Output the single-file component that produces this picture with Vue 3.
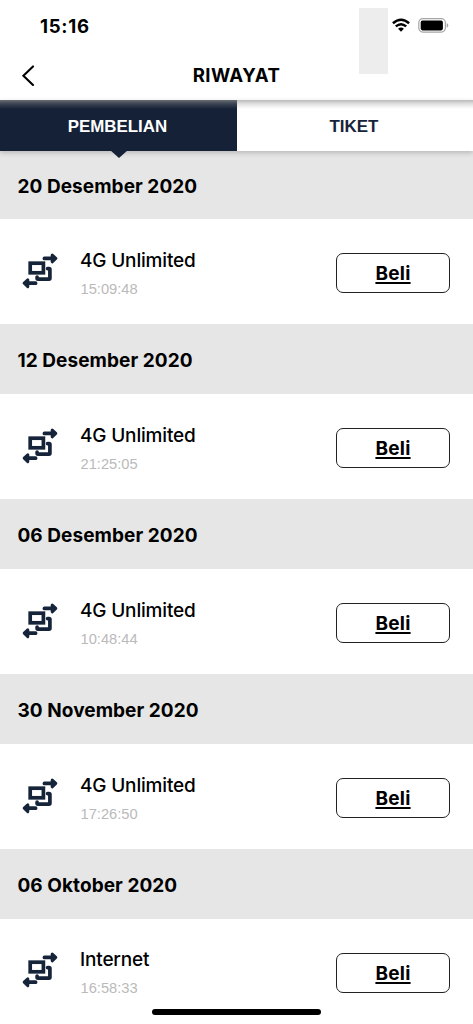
<script setup>
const groups = [
  { date: '20 Desember 2020', name: '4G Unlimited', time: '15:09:48' },
  { date: '12 Desember 2020', name: '4G Unlimited', time: '21:25:05' },
  { date: '06 Desember 2020', name: '4G Unlimited', time: '10:48:44' },
  { date: '30 November 2020', name: '4G Unlimited', time: '17:26:50' },
  { date: '06 Oktober 2020', name: 'Internet', time: '16:58:33' },
]
</script>

<template>
  <div class="screen">
    <header class="top">
      <div class="status">
        <span class="clock">15:16</span>
        <div class="indicators">
          <svg class="wifi" width="18" height="14" viewBox="0 0 18 14" fill="none" stroke="#000" stroke-width="2.5">
            <path d="M.9 5.2Q9-1.8 17.1 5.2" />
            <path d="M3.8 8.4Q9 4 14.2 8.4" />
            <path d="M6.1 10.8Q9 8.4 11.9 10.8L9 13.8Z" fill="#000" stroke="none" />
          </svg>
          <svg class="battery" width="31" height="15" viewBox="0 0 31 15">
            <rect x=".8" y=".7" width="26.6" height="13.4" rx="4" fill="none" stroke="#a6a6a6" stroke-width="1.2" />
            <rect x="2.7" y="2.6" width="22.2" height="9.8" rx="1.8" />
            <path d="M28.7 5v4.8Q30.3 9 30.3 7.4T28.7 5Z" fill="#a6a6a6" />
          </svg>
        </div>
      </div>
      <div class="titlebar">
        <svg class="back" width="14" height="22" viewBox="0 0 14 22" fill="none" stroke="#000" stroke-width="2.1" stroke-linecap="round">
          <path d="M12 1.4L2.4 10.8L12 20" />
        </svg>
        <h1>RIWAYAT</h1>
      </div>
      <i class="patch"></i>
    </header>
    <nav class="tabs">
      <div class="tab active"><span>PEMBELIAN</span></div>
      <div class="tab"><span>TIKET</span></div>
    </nav>
    <main>
      <section v-for="g in groups" :key="g.date">
        <h2><span>{{ g.date }}</span></h2>
        <div class="row">
          <svg class="swap" width="36" height="36" viewBox="0 0 36 36" fill="none" stroke="#16243a" stroke-width="3.7" stroke-linecap="round" stroke-linejoin="round">
            <rect x="8.2" y="10.2" width="13.2" height="9.6" stroke-linejoin="miter" />
            <path d="M25.6 15.6h1.4q.9 0 .9.9v8.8q0 .9-.9.9H16q-.9 0-.9-.9V24.2" />
            <path d="M22.4 5.4H31M13.6 30.2H5" />
            <path d="M30.2 2L33.8 5.4L30.2 8.8ZM5.8 26.8L2.2 30.2L5.8 33.6Z" fill="#16243a" stroke-width="3" />
          </svg>
          <div class="info">
            <div class="name"><span>{{ g.name }}</span></div>
            <div class="time"><span>{{ g.time }}</span></div>
          </div>
          <button><span>Beli</span></button>
        </div>
      </section>
    </main>
    <i class="home"></i>
  </div>
</template>

<style>
body { background: #fff; overflow: hidden; }
</style>

<style scoped>
.screen { position: relative; width: 473px; height: 1024px; overflow: hidden; background: #fff; color: #000; font-family: Inter, "Liberation Sans", sans-serif; }
.top { position: relative; height: 100px; }
.status { height: 51px; display: flex; justify-content: space-between; padding: 0 24px 0 40px; }
.clock { font-size: 18.6px; font-weight: 700; line-height: 52px; letter-spacing: .7px; }
.indicators { display: flex; gap: 8px; padding-top: 18px; }
.titlebar { height: 49px; display: grid; grid-template-columns: 60px 1fr 60px; align-items: center; }
.back { margin-left: 21px; }
h1 { margin: 0; text-align: center; font-size: 18.6px; line-height: 24px; font-weight: 700; letter-spacing: .45px; position: relative; top: -1px; }
.patch { position: absolute; left: 359px; top: 8px; width: 29px; height: 66px; background: #ededed; }
.tabs { position: relative; display: flex; height: 51px; z-index: 1; background: #fff; box-shadow: 0 2px 5px rgba(0,0,0,.2); }
.tabs::after { content: ""; position: absolute; inset: 0 0 auto; height: 9px; background: linear-gradient(rgba(150,150,150,.65), rgba(150,150,150,.28) 45%, rgba(150,150,150,0)); }
.tab { position: relative; width: 236.5px; text-align: center; color: #16243a; font: 700 16.9px/53px "Liberation Sans", sans-serif; }
.tab span { position: relative; left: -.8px; }
.active { color: #fff; background: #152136; }
.active::after { content: ""; position: absolute; left: 109.5px; top: 50px; border: solid transparent; border-width: 8px 9px 0; border-top-color: #152136; }
main { margin-top: -1.5px; }
h2 { margin: 0; height: 69.9px; padding: 0 17.5px; background: #e6e6e6; font-size: 19px; line-height: 73.2px; font-weight: 650; letter-spacing: .06px; }
.row { height: 105px; box-sizing: border-box; display: flex; align-items: center; padding: 0 23px 0 22px; }
.swap { flex: none; margin-top: -2px; }
.info { flex: 1; padding: 6px 0 0 22px; }
.name { font-size: 19px; font-weight: 500; line-height: 28px; letter-spacing: -.17px; }
.time { font: 400 14.7px/28px "Liberation Sans", sans-serif; color: #bababa; padding-left: .5px; }
button { width: 114px; height: 40px; margin-top: 3px; padding: 2px 0 0; border: 1.3px solid #222; border-radius: 7px; background: #fff; color: #000; font: 650 19px/36px Inter, sans-serif; letter-spacing: .25px; text-decoration: underline; text-underline-offset: 2px; text-decoration-thickness: 2px; text-decoration-skip-ink: none; }
.home { position: absolute; left: 152px; top: 1009px; width: 169px; height: 6px; border-radius: 3px; background: #000; }
</style>
